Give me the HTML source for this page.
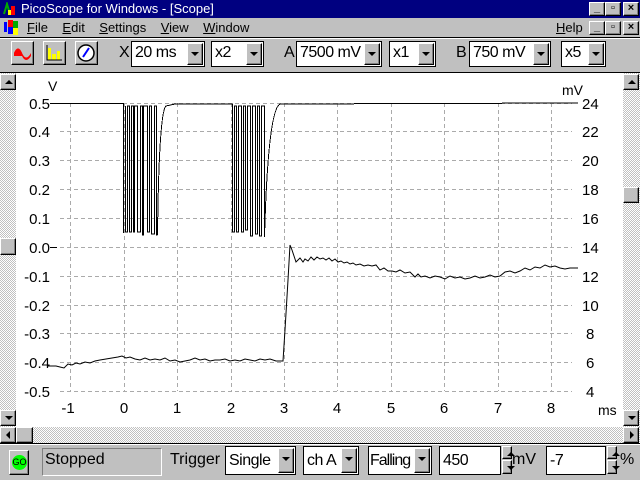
<!DOCTYPE html>
<html><head><style>
*{margin:0;padding:0;box-sizing:border-box}
body{width:640px;height:480px;background:#c0c0c0;position:relative;overflow:hidden;font-family:"Liberation Sans",sans-serif}
.a{position:absolute}
.raised{background:#c0c0c0;border-top:1px solid #fff;border-left:1px solid #fff;border-right:1px solid #000;border-bottom:1px solid #000;box-shadow:inset -1px -1px 0 #808080}
.combo{position:absolute;background:#fff;border:1px solid #000;font-size:16px;letter-spacing:-0.5px;line-height:22px;padding-left:3px;height:26px;overflow:hidden;white-space:nowrap}
.combo .btn{position:absolute;right:1px;top:1px;width:16px;height:22px;background:#c0c0c0;border-top:1px solid #fff;border-left:1px solid #fff;border-right:1px solid #000;border-bottom:1px solid #000;box-shadow:inset -1px -1px 0 #808080}
.combo .btn:after{content:"";position:absolute;left:3px;top:8px;border-left:4px solid transparent;border-right:4px solid transparent;border-top:4px solid #000}
.lbl{position:absolute;font-size:16px}
.hatch{background-color:#e0e0e0;background-image:repeating-conic-gradient(#c0c0c0 0 25%,#fff 0 50%);background-size:2px 2px}
.sb{position:absolute;width:16px;height:16px}
.tri-up:after,.tri-dn:after,.tri-l:after,.tri-r:after{content:"";position:absolute}
.tri-up:after{left:4px;top:5px;border-left:4px solid transparent;border-right:4px solid transparent;border-bottom:4px solid #000}
.tri-dn:after{left:4px;top:5px;border-left:4px solid transparent;border-right:4px solid transparent;border-top:4px solid #000}
.tri-l:after{left:5px;top:3px;border-top:4px solid transparent;border-bottom:4px solid transparent;border-right:4px solid #000}
.tri-r:after{left:6px;top:3px;border-top:4px solid transparent;border-bottom:4px solid transparent;border-left:4px solid #000}
.wb{position:absolute;width:16px;height:14px;font-size:11px;font-weight:bold;text-align:center;line-height:11px}
.sunk{border-top:1px solid #808080;border-left:1px solid #808080;border-right:1px solid #fff;border-bottom:1px solid #fff}
</style></head><body>
<div class="a" style="left:0;top:0;width:640px;height:18px;background:#000080"></div>
<div class="a" style="left:3px;top:2px;width:14px;height:14px">
<svg width="14" height="14"><path d="M1 12 L4 2 L7 12" stroke="#0a0" stroke-width="2" fill="none"/><rect x="8" y="4" width="4" height="9" fill="#f00"/><rect x="5" y="8" width="3" height="5" fill="#ff0"/></svg></div>
<div class="a" style="left:21px;top:1px;color:#fff;font-size:13px">PicoScope for Windows - [Scope]</div>
<div class="wb raised" style="left:589px;top:2px">_</div>
<div class="wb raised" style="left:605px;top:2px">▫</div>
<div class="wb raised" style="left:623px;top:2px">×</div>
<div class="a" style="left:4px;top:20px;width:16px;height:15px">
<svg width="16" height="15"><rect x="0" y="2" width="3" height="10" fill="#00f"/><rect x="4" y="0" width="5" height="7" fill="#f00"/><rect x="9" y="1" width="5" height="7" fill="#0a0"/><rect x="4" y="7" width="5" height="7" fill="#00f"/><rect x="9" y="8" width="5" height="7" fill="#ff0"/></svg></div>
<div class="a" style="left:27px;top:20px;font-size:13px"><u>F</u>ile&nbsp;&nbsp;&nbsp; <u>E</u>dit&nbsp;&nbsp;&nbsp; <u>S</u>ettings&nbsp;&nbsp;&nbsp; <u>V</u>iew&nbsp;&nbsp;&nbsp; <u>W</u>indow</div>
<div class="a" style="left:556px;top:20px;font-size:13px"><u>H</u>elp</div>
<div class="wb raised" style="left:589px;top:21px">_</div>
<div class="wb raised" style="left:605px;top:21px">▫</div>
<div class="wb raised" style="left:623px;top:21px">×</div>
<div class="a" style="left:0;top:37px;width:640px;height:1px;background:#000"></div>
<div class="a" style="left:0;top:38px;width:640px;height:1px;background:#fff"></div>
<div class="a raised" style="left:11px;top:41px;width:23px;height:24px"><svg width="21" height="22"><path d="M2 11 Q6 2 10 11 Q14 20 19 11 L19 14 Q14 22 10 14 L10 11Z" fill="#f00"/><path d="M2 11 Q6 2 10 11 L10 14 L2 14Z" fill="#f00"/></svg></div>
<div class="a raised" style="left:43px;top:41px;width:23px;height:24px"><svg width="21" height="22"><rect x="4" y="6" width="3" height="12" fill="#ff0"/><rect x="8" y="12" width="4" height="6" fill="#ff0"/><rect x="13" y="9" width="3" height="9" fill="#ff0"/><path d="M3 3 V18 H18" stroke="#000" fill="none"/></svg></div>
<div class="a raised" style="left:75px;top:41px;width:23px;height:24px"><svg width="21" height="22"><circle cx="10" cy="11" r="8" fill="#fff" stroke="#000" stroke-width="1.5"/><path d="M7 15 L13 6" stroke="#00f" stroke-width="2"/></svg></div>
<div class="lbl" style="left:119px;top:44px">X</div>
<div class="combo" style="left:131px;top:41px;width:74px">20 ms<div class="btn"></div></div>
<div class="combo" style="left:211px;top:41px;width:53px">x2<div class="btn"></div></div>
<div class="lbl" style="left:284px;top:44px">A</div>
<div class="combo" style="left:296px;top:41px;width:86px">7500 mV<div class="btn"></div></div>
<div class="combo" style="left:389px;top:41px;width:47px">x1<div class="btn"></div></div>
<div class="lbl" style="left:456px;top:44px">B</div>
<div class="combo" style="left:469px;top:41px;width:82px">750 mV<div class="btn"></div></div>
<div class="combo" style="left:561px;top:41px;width:45px">x5<div class="btn"></div></div>
<div class="a" style="left:0;top:72px;width:640px;height:1px;background:#000"></div>
<div class="a hatch" style="left:0;top:73px;width:16px;height:354px"></div>
<div class="a hatch" style="left:623px;top:73px;width:17px;height:354px"></div>
<div class="sb raised tri-up" style="left:0;top:74px"></div>
<div class="sb raised" style="left:0;top:238px;height:17px"></div>
<div class="sb raised tri-dn" style="left:0;top:410px"></div>
<div class="sb raised tri-up" style="left:623px;top:74px"></div>
<div class="sb raised" style="left:623px;top:187px"></div>
<div class="sb raised tri-dn" style="left:623px;top:410px"></div>
<div class="a hatch" style="left:0;top:427px;width:640px;height:16px"></div>
<div class="sb raised tri-l" style="left:0;top:427px"></div>
<div class="sb raised" style="left:16px;top:427px;width:17px"></div>
<div class="sb raised tri-r" style="left:623px;top:427px"></div>
<div class="a" style="left:16px;top:73px;width:607px;height:354px;background:#fff">
<svg width="607" height="354" style="position:absolute;left:0;top:0" font-family="Liberation Sans,sans-serif" font-size="15">
<g transform="translate(-16,-73)" stroke="#aaa" stroke-dasharray="4,3" fill="none" shape-rendering="crispEdges">
<path d="M60 103.5H572M60 131.5H572M60 160.5H572M60 189.5H572M60 218.5H572M60 247.5H572M60 276.5H572M60 305.5H572M60 333.5H572M60 362.5H572M60 391.5H572"/>
<path d="M70.5 103V391M124.5 103V391M177.5 103V391M231.5 103V391M284.5 103V391M337.5 103V391M391.5 103V391M444.5 103V391M498.5 103V391M551.5 103V391"/>
</g>
<g transform="translate(-16,-73)" fill="#000">
<text x="48" y="91" font-size="14">V</text>
<text x="562" y="95" font-size="14">mV</text>
<g text-anchor="end">
<text x="50" y="109">0.5</text><text x="50" y="137">0.4</text><text x="50" y="166">0.3</text><text x="50" y="195">0.2</text><text x="50" y="224">0.1</text><text x="50" y="253">0.0</text><text x="50" y="282">-0.1</text><text x="50" y="311">-0.2</text><text x="50" y="339">-0.3</text><text x="50" y="368">-0.4</text><text x="50" y="397">-0.5</text>
</g>
<text x="582" y="109">24</text><text x="582" y="137">22</text><text x="582" y="166">20</text><text x="582" y="195">18</text><text x="582" y="224">16</text><text x="582" y="253">14</text><text x="582" y="282">12</text><text x="582" y="311">10</text><text x="586" y="339">8</text><text x="586" y="368">6</text><text x="586" y="397">4</text>
<g text-anchor="middle">
<text x="68" y="413">-1</text><text x="124" y="413">0</text><text x="177" y="413">1</text><text x="231" y="413">2</text><text x="284" y="413">3</text><text x="337" y="413">4</text><text x="391" y="413">5</text><text x="444" y="413">6</text><text x="498" y="413">7</text><text x="551" y="413">8</text>
</g>
<text x="598" y="415" font-size="14">ms</text>
</g>
<g transform="translate(-16,-73)" stroke="#000" fill="none" stroke-width="1" shape-rendering="crispEdges">
<path d="M50 247.5H57"/>
<path d="M50 103.5H123.5V218M123.5 104V233M125.5 106V232H127.5V106H129.5V232H131.5V106H133.5V232H134.5V106H137.5V232H140.5V106H142.5V235H143.5V106H147.5V232H149.5V106H151.5V234H154.5V106H156.5V235H157.5"/>
<path d="M157.5 235 Q159 112 166 106 L175 104H232.5V218M232.5 104V232H234.5V106H236.5V232H238.5V106H241.5V232H243.5V106H245.5V230H247.5V106H250.5V236H252.5V106H255.5V234H257.5V106H259.5V236H261.5V106H264.5V237 Q268 110 280 104L578 103"/>
</g>
<g transform="translate(-16,-73)" stroke="#000" fill="none" stroke-width="1">
<path d="M48 366L56 366L60 367L64 368L68 364L72 365L76 363L80 364L85 362L90 363L95 361L100 360L106 359L112 358L118 357L122 356L126 358L130 357L135 359L140 360L145 358L150 360L155 359L160 360L165 358L170 361L175 360L180 362L185 361L190 360L195 358L200 360L205 359L210 361L215 360L220 360L225 359L230 361L235 360L240 361L245 359L250 360L255 361L260 359L265 360L270 359L276 361L283 361L285 330L288 280L290 245L292 250L294 256L296 262L298 260L300 258L303 262L305 259L308 261L311 257L314 260L317 257L320 259L323 258L326 260L329 258L332 261L335 259L338 262L341 261L344 263L347 262L350 264L353 263L356 265L360 264L364 266L368 265L372 266L376 265L380 270L384 268L388 271L392 271L396 272L400 270L405 273L410 272L415 277L418 274L421 277L425 276L430 278L435 276L440 277L445 279L450 276L455 278L460 277L465 279L470 278L475 276L480 278L485 277L490 275L495 277L500 276L505 272L510 271L515 273L520 271L525 268L530 270L535 267L540 268L545 265L550 267L555 266L560 268L565 269L570 268L578 268"/>
</g>
</svg>
</div>
<div class="a" style="left:0;top:443px;width:640px;height:1px;background:#000"></div>
<div class="a" style="left:0;top:444px;width:640px;height:1px;background:#fff"></div>
<div class="a raised" style="left:9px;top:450px;width:20px;height:25px"><div style="position:absolute;left:2px;top:4px;width:15px;height:15px;border-radius:50%;background:#0f0;font-size:9px;line-height:15px;text-align:center">GO</div></div>
<div class="a sunk" style="left:42px;top:448px;width:120px;height:28px;font-size:16px;padding:2px 0 0 2px">Stopped</div>
<div class="lbl" style="left:170px;top:451px">Trigger</div>
<div class="combo" style="left:225px;top:446px;width:71px;height:29px;line-height:27px">Single<div class="btn" style="height:25px"></div></div>
<div class="combo" style="left:303px;top:446px;width:56px;height:29px;line-height:27px">ch A<div class="btn" style="height:25px"></div></div>
<div class="combo" style="left:368px;top:446px;width:64px;height:29px;line-height:27px;padding-left:1px;letter-spacing:-1px">Falling<div class="btn" style="height:25px"></div></div>
<div class="combo" style="left:439px;top:446px;width:62px;height:29px;line-height:27px">450</div>
<div class="sb raised tri-up" style="left:502px;top:446px;width:10px;height:13px"></div>
<div class="sb raised tri-dn" style="left:502px;top:460px;width:10px;height:14px"></div>
<div class="lbl" style="left:512px;top:451px">mV</div>
<div class="combo" style="left:546px;top:446px;width:60px;height:29px;line-height:27px">-7</div>
<div class="sb raised tri-up" style="left:607px;top:446px;width:10px;height:13px"></div>
<div class="sb raised tri-dn" style="left:607px;top:460px;width:10px;height:14px"></div>
<div class="lbl" style="left:620px;top:451px">%</div>
</body></html>
